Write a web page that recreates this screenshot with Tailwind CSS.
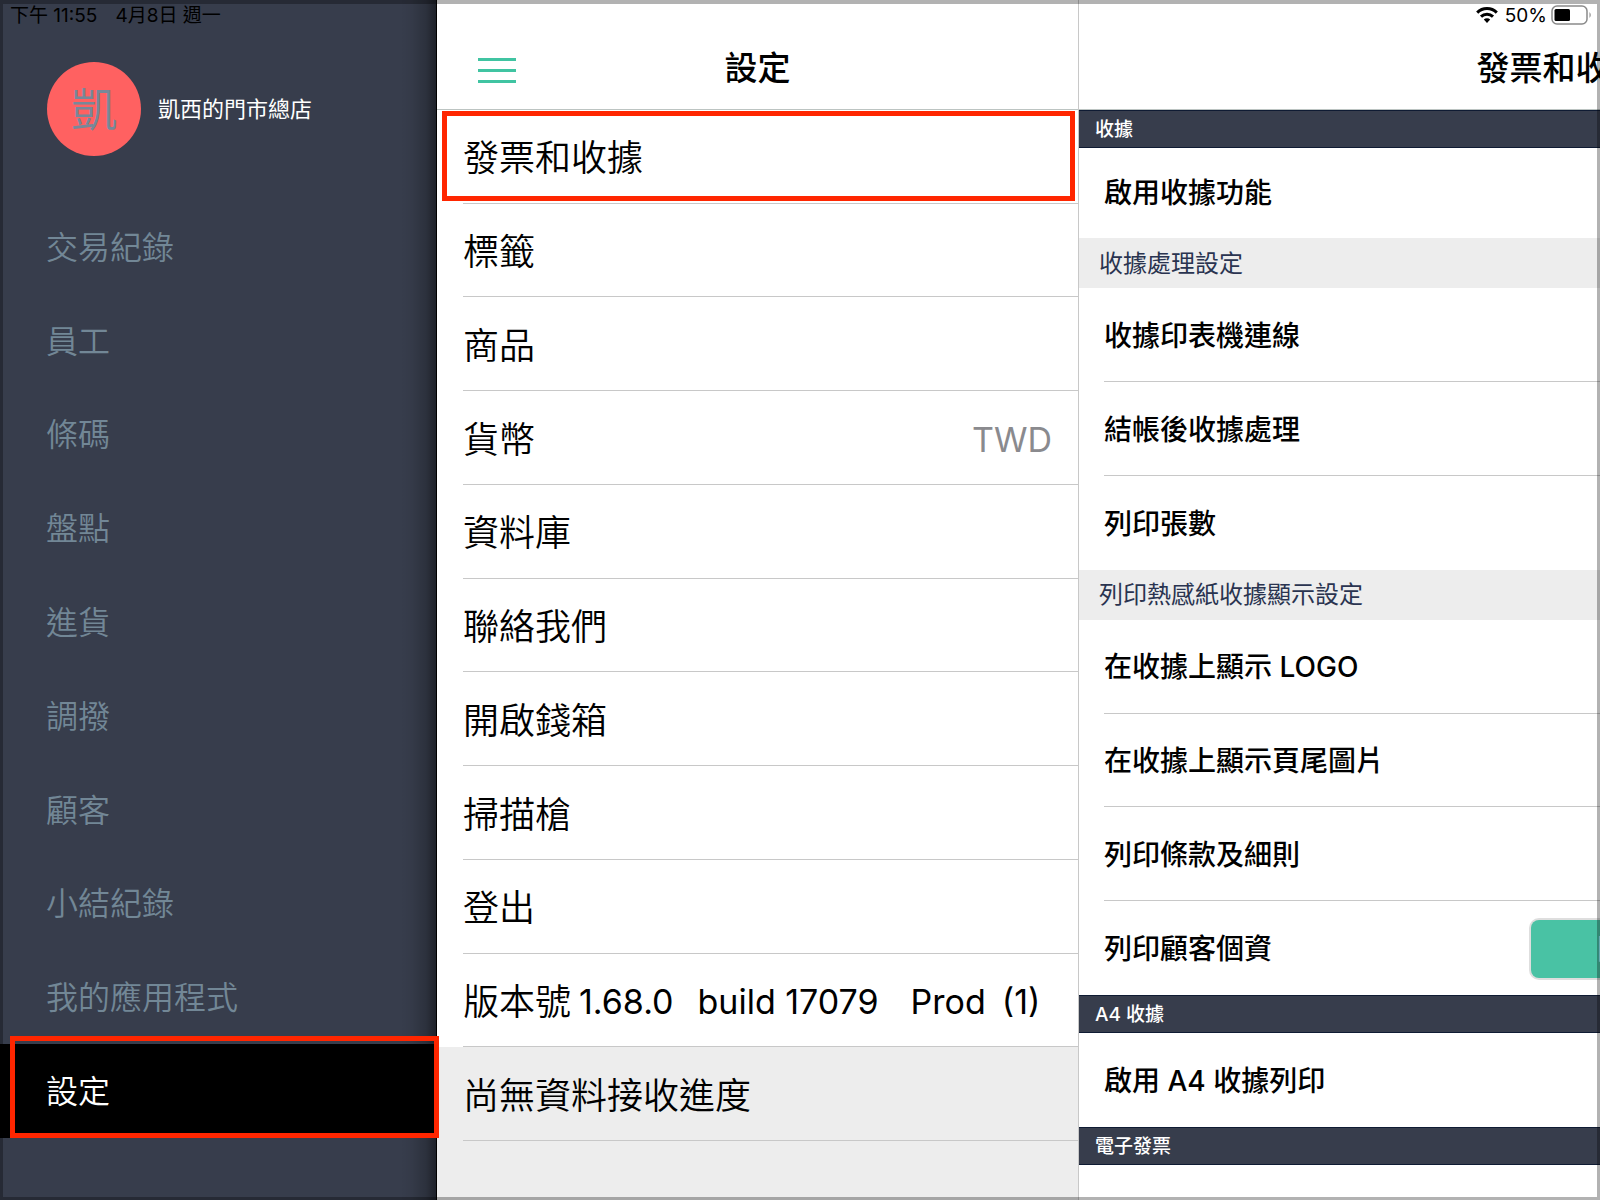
<!DOCTYPE html>
<html lang="zh-Hant">
<head>
<meta charset="utf-8">
<meta name="viewport" content="width=device-width, initial-scale=1">
<title>設定</title>
<script src="https://cdn.jsdelivr.net/npm/@tailwindcss/browser@4"></script>
</head>
<body class="relative grid min-h-screen grid-cols-[437px_642px_minmax(0,1fr)] overflow-x-hidden bg-white font-['Inter','Noto_Sans_CJK_TC',sans-serif] text-black">

  <!-- Main navigation -->
  <aside class="flex flex-col border-r border-black bg-[#373d4c] bg-[linear-gradient(to_left,rgba(0,0,0,0.45),rgba(0,0,0,0.2)_10px,rgba(0,0,0,0.05)_24px,transparent_36px)]">
    <div class="flex h-[200px] flex-col">
      <p class="flex h-[30px] items-center gap-[18px] pl-[10px] text-[19px] leading-none"><span>下午 11:55</span><span>4月8日 週一</span></p>
      <div class="flex items-center gap-[17px] pt-8 pl-[47px]">
        <span class="flex size-[94px] items-center justify-center rounded-full bg-[#ff6161] text-[46px] leading-none font-[350] text-[#778899]">凱</span>
        <span class="text-[22px] leading-none text-white">凱西的門市總店</span>
      </div>
    </div>
    <nav class="flex flex-1 flex-col text-[32px] leading-none font-[350] text-[#728796]">
      <a href="#" class="flex grow basis-16 items-center pt-[2px] pl-[46px]">交易紀錄</a>
      <a href="#" class="flex grow basis-16 items-center pt-[2px] pl-[46px]">員工</a>
      <a href="#" class="flex grow basis-16 items-center pt-[2px] pl-[46px]">條碼</a>
      <a href="#" class="flex grow basis-16 items-center pt-[2px] pl-[46px]">盤點</a>
      <a href="#" class="flex grow basis-16 items-center pt-[2px] pl-[46px]">進貨</a>
      <a href="#" class="flex grow basis-16 items-center pt-[2px] pl-[46px]">調撥</a>
      <a href="#" class="flex grow basis-16 items-center pt-[2px] pl-[46px]">顧客</a>
      <a href="#" class="flex grow basis-16 items-center pt-[2px] pl-[46px]">小結紀錄</a>
      <a href="#" class="flex grow basis-16 items-center pt-[2px] pl-[46px]">我的應用程式</a>
      <a href="#" aria-current="page" class="relative z-20 flex grow basis-16 items-center bg-black pt-[2px] pl-[46px] text-white">設定
        <span class="absolute -top-2 -right-[3px] bottom-0 left-[10px] border-5 border-[#ff2600]"></span>
      </a>
    </nav>
    <div class="h-[62px]"></div>
  </aside>

  <!-- Settings list -->
  <section class="flex flex-col border-r border-[#c8c8c8] bg-[#ededed]">
    <header class="grid h-[110px] grid-cols-[1fr_auto_1fr] items-center border-b border-[#bcc4c2] bg-white pt-8">
      <button aria-label="選單" class="ml-[41px] flex w-[38px] flex-col gap-2">
        <span class="h-[3px] bg-[#40c4a2]"></span>
        <span class="h-[3px] bg-[#40c4a2]"></span>
        <span class="h-[3px] bg-[#40c4a2]"></span>
      </button>
      <h1 class="pb-1 text-[33px] leading-none font-medium">設定</h1>
    </header>
    <ul class="flex flex-1 flex-col text-[36px] leading-none font-[350]">
      <li class="relative flex grow basis-16 bg-white pl-[26px]">
        <a href="#" class="flex flex-1 items-center border-b border-[#c8c8c8] pt-1">發票和收據</a>
        <span class="absolute top-px right-[3px] bottom-[3px] left-[5px] border-5 border-[#ff2600]"></span>
      </li>
      <li class="flex grow basis-16 bg-white pl-[26px]"><a href="#" class="flex flex-1 items-center border-b border-[#c8c8c8] pt-1">標籤</a></li>
      <li class="flex grow basis-16 bg-white pl-[26px]"><a href="#" class="flex flex-1 items-center border-b border-[#c8c8c8] pt-1">商品</a></li>
      <li class="flex grow basis-16 bg-white pl-[26px]"><a href="#" class="flex flex-1 items-center justify-between border-b border-[#c8c8c8] pt-1 pr-[26px]">貨幣 <span class="text-[34px] font-normal text-[#8a8a8e]">TWD</span></a></li>
      <li class="flex grow basis-16 bg-white pl-[26px]"><a href="#" class="flex flex-1 items-center border-b border-[#c8c8c8] pt-1">資料庫</a></li>
      <li class="flex grow basis-16 bg-white pl-[26px]"><a href="#" class="flex flex-1 items-center border-b border-[#c8c8c8] pt-1">聯絡我們</a></li>
      <li class="flex grow basis-16 bg-white pl-[26px]"><a href="#" class="flex flex-1 items-center border-b border-[#c8c8c8] pt-1">開啟錢箱</a></li>
      <li class="flex grow basis-16 bg-white pl-[26px]"><a href="#" class="flex flex-1 items-center border-b border-[#c8c8c8] pt-1">掃描槍</a></li>
      <li class="flex grow basis-16 bg-white pl-[26px]"><a href="#" class="flex flex-1 items-center border-b border-[#c8c8c8] pt-1">登出</a></li>
      <li class="flex grow basis-16 bg-white pl-[26px]">
        <p class="flex flex-1 items-center border-b border-[#c8c8c8] pt-1">
          <span class="mr-2">版本號</span>
          <span class="mr-6 text-[34px] font-normal">1.68.0</span>
          <span class="mr-8 text-[34px] font-normal">build 17079</span>
          <span class="mr-4 text-[34px] font-normal">Prod</span>
          <span class="text-[34px] font-normal">(1)</span>
        </p>
      </li>
      <li class="flex grow basis-16 pl-[26px]"><p class="flex flex-1 items-center border-b border-[#c8c8c8] pt-1">尚無資料接收進度</p></li>
    </ul>
    <div class="h-[59px]"></div>
  </section>

  <!-- Invoice and receipt pane; its content is wider than the visible part -->
  <section class="relative overflow-hidden">
    <div class="absolute top-[3px] right-[7px] flex h-6 items-center gap-1">
      <svg class="mr-[3px] h-4 w-[22px]" viewBox="0 0 22 16" fill="none" stroke="#000" stroke-width="3" aria-label="Wi-Fi">
        <path d="M1.2 5.6a14 14 0 0 1 19.6 0"/>
        <path d="M5 9.6a8.6 8.6 0 0 1 12 0"/>
        <path d="M11 16l-3.2-3.4a4.6 4.6 0 0 1 6.4 0z" fill="#000" stroke="none"/>
      </svg>
      <span class="text-[19px] leading-none">50%</span>
      <svg class="h-5 w-[42px]" viewBox="0 0 42 20" aria-label="電量">
        <rect x="1" y="1" width="35" height="18" rx="5" fill="none" stroke="#8a8a8a" stroke-width="1.5"/>
        <rect x="3.5" y="4" width="15.5" height="12" rx="1.5"/>
        <path d="M38.5 7q2.5 3 0 6z" fill="#8a8a8a"/>
      </svg>
    </div>
    <div class="flex min-h-full w-[960px] flex-col text-[28px] leading-none font-medium">
      <header class="flex h-[110px] items-center justify-center border-b border-[#bcc4c2] pt-7">
        <h2 class="text-[33px] leading-none">發票和收據</h2>
      </header>
      <h3 class="flex h-[38px] items-center border-y border-[#0f1b33] bg-[#373d4c] pl-4 text-[19px] text-white">收據</h3>
      <p class="flex h-[90px] items-center pl-[25px]">啟用收據功能</p>
      <h4 class="flex h-[50px] items-center bg-[#ededed] pt-[2px] pl-5 text-[24px] font-normal text-[#2a3450]">收據處理設定</h4>
      <div class="flex grow basis-16 pl-[25px]"><p class="flex flex-1 items-center border-b border-[#c8c8c8] pt-1">收據印表機連線</p></div>
      <div class="flex grow basis-16 pl-[25px]"><p class="flex flex-1 items-center border-b border-[#c8c8c8] pt-1">結帳後收據處理</p></div>
      <div class="flex grow basis-16 pl-[25px]"><p class="flex flex-1 items-center pt-[2px]">列印張數</p></div>
      <h4 class="flex h-[50px] items-center bg-[#ededed] pl-5 text-[24px] font-normal text-[#2a3450]">列印熱感紙收據顯示設定</h4>
      <div class="flex grow basis-16 pl-[25px]"><p class="flex flex-1 items-center border-b border-[#c8c8c8] pt-[2px]">在收據上顯示 LOGO</p></div>
      <div class="flex grow basis-16 pl-[25px]"><p class="flex flex-1 items-center border-b border-[#c8c8c8] pt-[2px]">在收據上顯示頁尾圖片</p></div>
      <div class="flex grow basis-16 pl-[25px]"><p class="flex flex-1 items-center border-b border-[#c8c8c8] pt-[2px]">列印條款及細則</p></div>
      <div class="flex grow basis-16 items-center justify-between pt-[2px] pr-6 pl-[25px]">
        <p>列印顧客個資</p>
        <button class="h-[58px] w-[484px] rounded-lg bg-[#49c2a4] pl-[66px] text-left text-white ring-2 ring-[#dedede]">開</button>
      </div>
      <h3 class="flex h-[38px] items-center border-y border-[#0f1b33] bg-[#373d4c] pl-4 text-[19px] text-white">A4 收據</h3>
      <div class="flex grow basis-16 pl-[25px]"><p class="flex flex-1 items-center pt-[2px]">啟用 A4 收據列印</p></div>
      <h3 class="flex h-[38px] items-center border-y border-[#0f1b33] bg-[#373d4c] pl-4 text-[19px] text-white">電子發票</h3>
      <div class="h-[35px]"></div>
    </div>
  </section>

  <!-- Shaded frame round the screen -->
  <div class="pointer-events-none absolute inset-0 z-10 border-3 border-t-4 border-black/30"></div>
</body>
</html>
